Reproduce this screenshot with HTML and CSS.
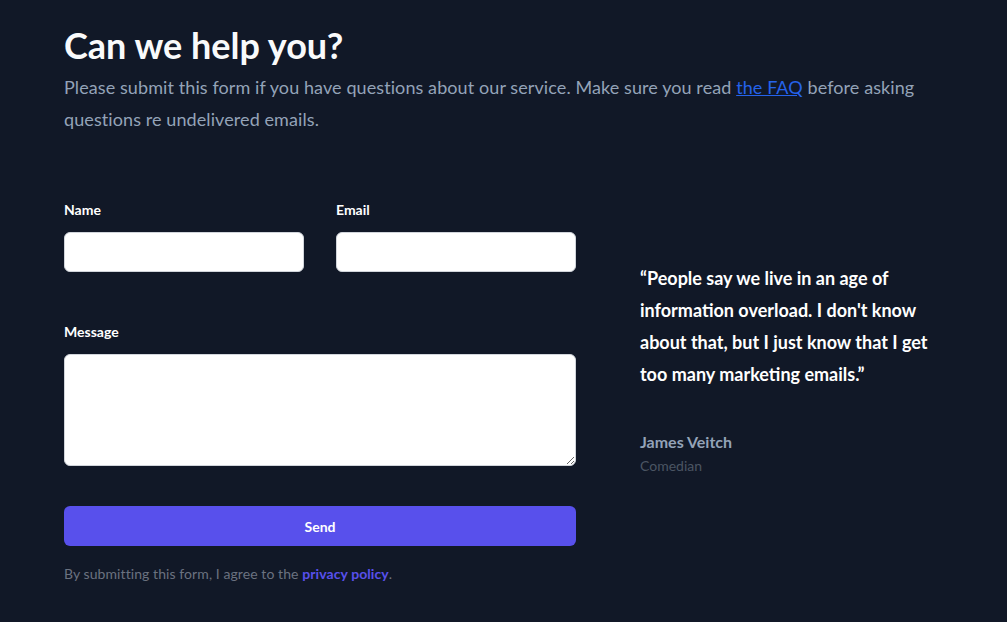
FILE: index.html
```html
<!DOCTYPE html>
<html lang="en">
<head>
<meta charset="utf-8">
<title>Contact</title>
<link rel="stylesheet" href="styles.css">
</head>
<body>
<main class="page">
  <header class="intro">
    <h1 class="title">Can we help you?</h1>
    <p class="lead">Please submit this form if you have questions about our service. Make sure you read <a href="#" class="faq">the FAQ</a> before asking questions re undelivered emails.</p>
  </header>
  <section class="content">
    <form class="form">
      <div class="row">
        <div class="field">
          <label class="label" for="name">Name</label>
          <input class="input" id="name" type="text">
        </div>
        <div class="field">
          <label class="label" for="email">Email</label>
          <input class="input" id="email" type="email">
        </div>
      </div>
      <div class="field field-message">
        <label class="label" for="msg">Message</label>
        <textarea class="textarea" id="msg"></textarea>
      </div>
      <button type="button" class="send">Send</button>
      <p class="terms">By submitting this form, I agree to the <a href="#" class="policy">privacy policy</a>.</p>
    </form>
    <aside class="quote">
      <blockquote class="quote-text">“People say we live in an age of information overload. I don't know about that, but I just know that I get too many marketing emails.”</blockquote>
      <div class="author">James Veitch</div>
      <div class="role">Comedian</div>
    </aside>
  </section>
</main>
</body>
</html>
```
FILE: styles.css
```css
* { box-sizing: border-box; }
html, body { margin: 0; padding: 0; }
body {
  background: #111827;
  font-family: Lato, "Noto Sans", sans-serif;
  color: #fff;
}
.page {
  padding: 25px 64px 0 64px;
}
.title {
  margin: 0;
  font-size: 36px;
  line-height: 40px;
  font-weight: 700;
  color: #f9fafb;
}
.lead {
  margin: 6px 0 0 0;
  font-size: 18px;
  line-height: 32px;
  letter-spacing: 0.09px;
  color: #94a3b8;
}
.faq { color: #2563eb; text-decoration: underline; }
.content {
  display: grid;
  grid-template-columns: 512px 1fr;
  column-gap: 64px;
  margin-top: 65px;
}
.form { display: flex; flex-direction: column; }
.row { display: grid; grid-template-columns: 1fr 1fr; column-gap: 32px; }
.field { display: flex; flex-direction: column; }
.field-message { margin-top: 50px; }
.label {
  font-size: 14px;
  line-height: 20px;
  font-weight: 700;
  color: #fff;
  margin-bottom: 12px;
}
.input, .textarea {
  background: #fff;
  border: 1px solid #d1d5db;
  border-radius: 6px;
  font: inherit;
  margin: 0;
}
.input { height: 40px; }
.textarea { height: 112px; resize: vertical; display: block; }
.send {
  margin-top: 40px;
  height: 40px;
  border: 0;
  border-radius: 6px;
  background: #5850ec;
  color: #fff;
  font-family: inherit;
  font-size: 14px;
  font-weight: 700;
}
.terms {
  margin: 18px 0 0 0;
  font-size: 14px;
  line-height: 20px;
  letter-spacing: 0.08px;
  color: #6b7280;
}
.policy { color: #5850ec; font-weight: 700; text-decoration: none; }
.quote { padding-top: 62px; }
.quote-text {
  margin: 0;
  font-size: 18px;
  line-height: 32px;
  font-weight: 700;
  color: #fff;
}
.author {
  margin-top: 40px;
  font-size: 16px;
  line-height: 24px;
  font-weight: 700;
  color: #94a3b8;
}
.role {
  margin-top: 2px;
  font-size: 14px;
  line-height: 20px;
  color: #4b5563;
}
```
